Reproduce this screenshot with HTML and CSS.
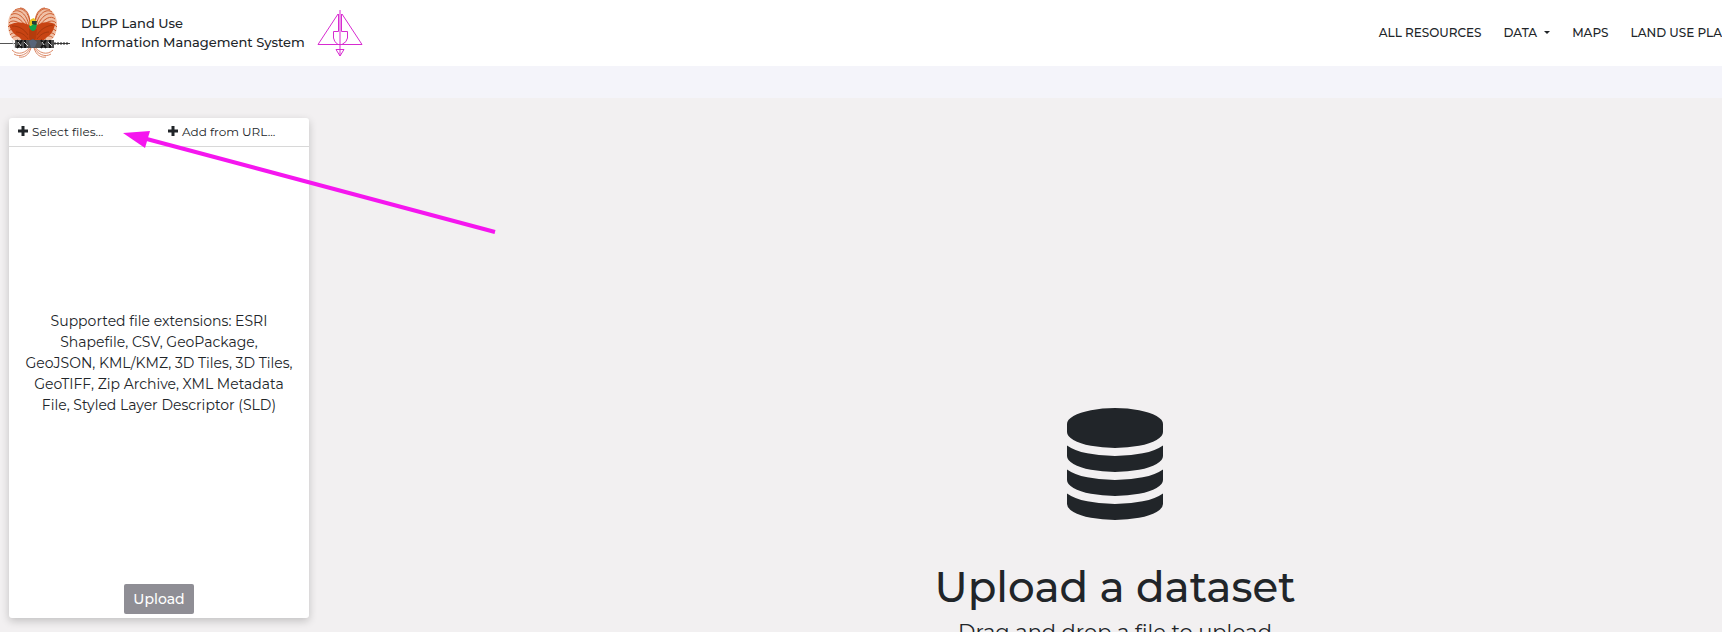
FILE: index.html
```html
<!DOCTYPE html>
<html lang="en">
<head>
<meta charset="utf-8">
<title>DLPP Land Use Information Management System</title>
<link rel="stylesheet" href="styles.css">
</head>
<body>
<header class="topbar">
  <a class="brand" href="#" aria-label="Home">
    <svg class="crest" viewBox="0 0 72 54" aria-hidden="true">
      <path d="M0 37.500H16" stroke="#555" fill="none"/>
      <path d="M53 37.500H70" stroke="#444" fill="none"/>
      <path d="M54 37.500H68" stroke="#333" stroke-width="2" stroke-dasharray="2 1" fill="none"/>
      <g id="plume">
        <path d="M30 20C29 10 26 3 20 2C12 3 8 10 8 19C8 27 11 33 17 36L30 34Z" fill="#f0c0a6"/>
        <path d="M30 20C30 6 22 0 15 4M29 20C27 8 19 2 13 6M28 21C24 10 16 5 11 9M27 22C21 12 14 9 10 13M26 23C19 15 12 13 9 17M25 25C18 19 11 17 8 21M24 27C18 22 11 22 9 25M24 29C18 26 12 26 10 29M23 31C18 29 13 30 12 32M30 18C30 8 26 2 20 2" fill="none" stroke="#cc5a2c"/>
        <path d="M31 40C26 47 18 50 12 44M31 41C28 48 20 52 14 48M31 42C29 49 24 52 19 51" fill="none" stroke="#dd8a68"/>
      </g>
      <use href="#plume" transform="matrix(-1 0 0 1 65 0)"/>
      <path d="M30 20C25 16 17 15 9 19C11 25 15 29 19 31C21 34 25 36 28 36H37C41 36 45 34 47 31C51 29 54 24 55 18C48 15 41 16 36 20Z" fill="#c84413"/>
      <path d="M12 20C19 20 24 23 28 29M16 26C21 26 25 29 28 33M53 19C46 20 41 23 37 29M49 26C44 26 40 29 37 33" stroke="#a6380d" fill="none"/>
      <path d="M29 23H37L36 32C34 36 31 36 29 32Z" fill="#b53c0c"/>
      <path d="M29 20Q33 15 37 18L36 23Q33 27 30 23Z" fill="#12a24a"/>
      <path d="M30 20Q28 13 34 12L37 16L33 18L31 20Z" fill="#e8c51b"/>
      <path d="M32 15L37 15L36 19L32 18Z" fill="#263c36"/>
      <path d="M15 34H54V42H15Z" fill="#505050"/>
      <path d="M17 34L22 42M22 34L17 42M25 34V42M41 34L46 42M46 34L41 42M50 34V42" stroke="#161616" stroke-width="2" fill="none"/>
      <path d="M18 36L21 40M24 36L28 40M42 36L44 39M48 36L52 40M12 34L15 42" stroke="#ddd" fill="none"/>
      <path d="M29 35L33 33L37 36L35 41L31 42Z" fill="#576479"/>
    </svg>
    <span class="brand-name">DLPP Land Use<br>Information Management System</span>
    <svg class="compass" viewBox="0 0 46 48" fill="none" stroke="#d72bd0" aria-hidden="true">
      <path d="M21 5L1 35.500H45L25 5M21.500 5V22.500H16.500V29Q17 33 21 35.500M24.500 5V22.500H30.500V29Q30 33 25 35.500"/>
      <path d="M23 1V47M19 40.500H27L23 47Z"/>
    </svg>
  </a>
  <nav class="nav">
    <a href="#">ALL RESOURCES</a>
    <a href="#" class="has-menu">DATA</a>
    <a href="#">MAPS</a>
    <a href="#">LAND USE PLA</a>
  </nav>
</header>
<div class="band"></div>
<div class="workspace">
  <aside class="panel">
    <div class="sources">
      <button type="button"><svg class="plus" viewBox="0 0 10 10" aria-hidden="true"><path d="M5 0V10M0 5H10"/></svg>Select files...</button>
      <button type="button"><svg class="plus" viewBox="0 0 10 10" aria-hidden="true"><path d="M5 0V10M0 5H10"/></svg>Add from URL...</button>
    </div>
    <p class="hint">Supported file extensions: ESRI<br>Shapefile, CSV, GeoPackage,<br>GeoJSON, KML/KMZ, 3D Tiles, 3D Tiles,<br>GeoTIFF, Zip Archive, XML Metadata<br>File, Styled Layer Descriptor (SLD)</p>
    <div class="actions"><button type="button" class="upload">Upload</button></div>
  </aside>
  <main class="drop">
    <svg class="database" viewBox="0 0 1536 1792" aria-hidden="true"><path d="M768 768q237 0 443-43t325-127v170q0 69-103 128t-280 93.500-385 34.500-385-34.500-280-93.500-103-128v-170q119 84 325 127t443 43zm0 768q237 0 443-43t325-127v170q0 69-103 128t-280 93.500-385 34.500-385-34.500-280-93.500-103-128v-170q119 84 325 127t443 43zm0-384q237 0 443-43t325-127v170q0 69-103 128t-280 93.500-385 34.500-385-34.500-280-93.500-103-128v-170q119 84 325 127t443 43zm0-1152q208 0 385 34.500t280 93.500 103 128v128q0 69-103 128t-280 93.500-385 34.500-385-34.500-280-93.500-103-128v-128q0-69 103-128t280-93.500 385-34.500z"/></svg>
    <h1>Upload a dataset</h1>
    <p class="lead">Drag and drop a file to upload</p>
  </main>
  <svg class="pointer" viewBox="0 0 374 104" aria-hidden="true"><path d="M20 8L372 102" fill="none" stroke="#f516ef" stroke-width="4"/><path d="M0 3L27 1L22 18Z" fill="#f516ef"/></svg>
</div>
</body>
</html>
```
FILE: styles.css
```css
* { box-sizing: border-box; }
body {
  margin: 0;
  height: 100vh;
  overflow: hidden;
  display: flex;
  flex-direction: column;
  background: #f2f0f1;
  color: #212529;
  font-family: Montserrat, Inter, sans-serif;
  font-size: 14px;
}
a { color: inherit; text-decoration: none; }
button { font: inherit; color: inherit; border: 0; background: none; cursor: pointer; }
.topbar {
  flex: none;
  display: flex;
  align-items: center;
  justify-content: space-between;
  height: 66px;
  background: #fff;
}
.brand { display: flex; align-items: center; }
.crest { width: 72px; height: 54px; margin-right: 9px; }
.brand-name { font-size: 13px; line-height: 19px; font-weight: 500; white-space: nowrap; }
.compass { width: 46px; height: 48px; margin-left: 12px; }
.nav { display: flex; gap: 22px; padding-bottom: 2px; font-size: 12px; font-weight: 500; white-space: nowrap; }
.has-menu { display: flex; align-items: center; gap: 7px; }
.has-menu::after { content: ""; border: 3px solid transparent; border-top-color: currentColor; border-bottom: 0; }
.band { flex: none; height: 32px; background: #f4f4fa; }
.workspace { flex: 1; position: relative; display: flex; align-items: flex-start; padding: 20px 0 0 9px; }
.panel {
  flex: none;
  display: flex;
  flex-direction: column;
  width: 300px;
  height: 500px;
  background: #fff;
  border-radius: 3px;
  box-shadow: 0 3px 8px rgba(0, 0, 0, .2);
}
.sources { display: grid; grid-template-columns: 1fr 1fr; height: 29px; border-bottom: 1px solid #d8d8d8; }
.sources button { display: flex; align-items: center; gap: 4px; padding: 0 9px 2px; font-size: 12px; white-space: nowrap; }
.plus { width: 10px; height: 10px; fill: none; stroke: #212529; stroke-width: 3; }
.hint { margin: auto 0; text-align: center; line-height: 21px; white-space: nowrap; }
.actions { padding: 4px; text-align: center; }
.upload { width: 70px; height: 30px; padding: 0; background: #8f8e95; color: #fff; border-radius: 2px; font-weight: 500; }
.drop { flex: 1; display: flex; flex-direction: column; align-items: center; padding: 290px 0 0 199px; white-space: nowrap; }
.database { width: 96px; height: 112px; fill: #212529; }
h1 { margin: 42px 0 4px; font-size: 42px; line-height: 50px; font-weight: 500; }
.lead { margin: 0; font-size: 21px; line-height: 32px; }
.pointer { position: absolute; left: 123px; top: 32px; width: 374px; height: 104px; }
```
